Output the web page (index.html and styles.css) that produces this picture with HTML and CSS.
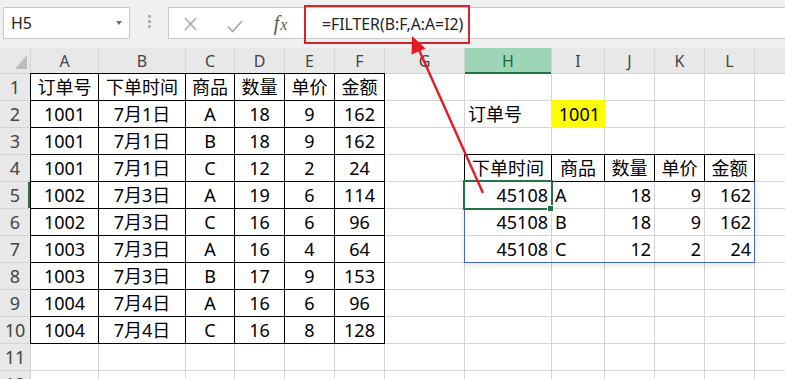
FILE: index.html
```html
<!DOCTYPE html>
<html lang="zh-CN">
<head>
    <meta charset="UTF-8">
    <meta name="viewport" content="width=device-width, initial-scale=1.0">
    <title>FILTER</title>
    <link rel="stylesheet" href="styles.css">
</head>
<body>
    <div class="toolbar">
        <div class="namebox">
            <span>H5</span>
            <span class="caret"></span>
        </div>
        <div class="grip"><i></i><i></i><i></i></div>
        <div class="formula">
            <span class="icon icon-cancel">
                <svg width="13" height="14" viewBox="0 0 13 14"><path d="M1 1 L12 13 M12 1 L1 13" stroke="#a8a8a8" stroke-width="1.4" fill="none"/></svg>
            </span>
            <span class="icon icon-ok">
                <svg width="16" height="13" viewBox="0 0 16 13"><path d="M1 6.5 L5.5 11.5 L15 1" stroke="#a8a8a8" stroke-width="1.6" fill="none"/></svg>
            </span>
            <span class="icon icon-fx"><i>f</i><i class="x">x</i></span>
            <span class="formula-text">=FILTER(B:F,A:A=I2)</span>
        </div>
    </div>

    <div class="sheet">
        <!-- column headers -->
        <div class="corner">
            <svg width="30" height="25" viewBox="0 0 30 25"><polygon points="15,21 27,21 27,7" fill="#bdbdbd"/></svg>
        </div>
        <div class="ch">A</div><div class="ch">B</div><div class="ch">C</div><div class="ch">D</div>
        <div class="ch">E</div><div class="ch">F</div><div class="ch">G</div><div class="ch active">H</div>
        <div class="ch">I</div><div class="ch">J</div><div class="ch">K</div><div class="ch">L</div><div class="ch"></div>

        <!-- row 1 -->
        <div class="rh">1</div>
        <div class="c b">订单号</div><div class="c b">下单时间</div><div class="c b">商品</div>
        <div class="c b">数量</div><div class="c b">单价</div><div class="c b">金额</div>
        <div class="c"></div><div class="c"></div><div class="c"></div><div class="c"></div>
        <div class="c"></div><div class="c"></div><div class="c"></div>

        <!-- row 2 -->
        <div class="rh">2</div>
        <div class="c b">1001</div><div class="c b">7月1日</div><div class="c b">A</div>
        <div class="c b">18</div><div class="c b">9</div><div class="c b">162</div>
        <div class="c"></div>
        <div class="c l">订单号</div><div class="c r yellow">1001</div>
        <div class="c"></div><div class="c"></div><div class="c"></div><div class="c"></div>

        <!-- row 3 -->
        <div class="rh">3</div>
        <div class="c b">1001</div><div class="c b">7月1日</div><div class="c b">B</div>
        <div class="c b">18</div><div class="c b">9</div><div class="c b">162</div>
        <div class="c"></div><div class="c"></div><div class="c"></div><div class="c"></div>
        <div class="c"></div><div class="c"></div><div class="c"></div>

        <!-- row 4 -->
        <div class="rh">4</div>
        <div class="c b">1001</div><div class="c b">7月1日</div><div class="c b">C</div>
        <div class="c b">12</div><div class="c b">2</div><div class="c b">24</div>
        <div class="c"></div>
        <div class="c b">下单时间</div><div class="c b">商品</div><div class="c b">数量</div>
        <div class="c b">单价</div><div class="c b">金额</div>
        <div class="c"></div>

        <!-- row 5 -->
        <div class="rh sel-row">5</div>
        <div class="c b">1002</div><div class="c b">7月3日</div><div class="c b">A</div>
        <div class="c b">19</div><div class="c b">6</div><div class="c b">114</div>
        <div class="c"></div>
        <div class="c r selected">45108</div><div class="c l">A</div><div class="c r">18</div>
        <div class="c r">9</div><div class="c r">162</div>
        <div class="c"></div>

        <!-- row 6 -->
        <div class="rh">6</div>
        <div class="c b">1002</div><div class="c b">7月3日</div><div class="c b">C</div>
        <div class="c b">16</div><div class="c b">6</div><div class="c b">96</div>
        <div class="c"></div>
        <div class="c r">45108</div><div class="c l">B</div><div class="c r">18</div>
        <div class="c r">9</div><div class="c r">162</div>
        <div class="c"></div>

        <!-- row 7 -->
        <div class="rh">7</div>
        <div class="c b">1003</div><div class="c b">7月3日</div><div class="c b">A</div>
        <div class="c b">16</div><div class="c b">4</div><div class="c b">64</div>
        <div class="c"></div>
        <div class="c r">45108</div><div class="c l">C</div><div class="c r">12</div>
        <div class="c r">2</div><div class="c r">24</div>
        <div class="c"></div>

        <!-- row 8 -->
        <div class="rh">8</div>
        <div class="c b">1003</div><div class="c b">7月3日</div><div class="c b">B</div>
        <div class="c b">17</div><div class="c b">9</div><div class="c b">153</div>
        <div class="c"></div><div class="c"></div><div class="c"></div><div class="c"></div>
        <div class="c"></div><div class="c"></div><div class="c"></div>

        <!-- row 9 -->
        <div class="rh">9</div>
        <div class="c b">1004</div><div class="c b">7月4日</div><div class="c b">A</div>
        <div class="c b">16</div><div class="c b">6</div><div class="c b">96</div>
        <div class="c"></div><div class="c"></div><div class="c"></div><div class="c"></div>
        <div class="c"></div><div class="c"></div><div class="c"></div>

        <!-- row 10 -->
        <div class="rh">10</div>
        <div class="c b">1004</div><div class="c b">7月4日</div><div class="c b">C</div>
        <div class="c b">16</div><div class="c b">8</div><div class="c b">128</div>
        <div class="c"></div><div class="c"></div><div class="c"></div><div class="c"></div>
        <div class="c"></div><div class="c"></div><div class="c"></div>

        <!-- row 11 -->
        <div class="rh">11</div>
        <div class="c"></div><div class="c"></div><div class="c"></div><div class="c"></div>
        <div class="c"></div><div class="c"></div><div class="c"></div><div class="c"></div>
        <div class="c"></div><div class="c"></div><div class="c"></div><div class="c"></div><div class="c"></div>

        <!-- row 12 -->
        <div class="rh">12</div>
        <div class="c"></div><div class="c"></div><div class="c"></div><div class="c"></div>
        <div class="c"></div><div class="c"></div><div class="c"></div><div class="c"></div>
        <div class="c"></div><div class="c"></div><div class="c"></div><div class="c"></div><div class="c"></div>

        <!-- spill range border H5:L7 -->
        <div class="spill"></div>
    </div>

    <svg class="arrow" width="785" height="379" viewBox="0 0 785 379">
        <line x1="483" y1="193" x2="419" y2="50" stroke="#e31b23" stroke-width="2.4"/>
        <polygon points="412,36 425.5,48.5 411.5,54.5" fill="#e31b23"/>
    </svg>
</body>
</html>
```

FILE: styles.css
```css
body {
    margin: 0;
    width: 785px;
    height: 379px;
    overflow: hidden;
    position: relative;
    background-color: #fff;
    font-family: "Noto Sans", "Noto Sans CJK SC", sans-serif;
}

.toolbar {
    height: 48px;
    box-sizing: border-box;
    padding: 7px 0 0 3px;
    display: flex;
    align-items: flex-start;
    background-color: #f0f0f0;
}

.namebox {
    width: 127px;
    height: 32px;
    box-sizing: border-box;
    border: 1px solid #c9c9c9;
    background-color: #fff;
    display: flex;
    align-items: center;
    padding-left: 7px;
    font-size: 16px;
    color: #222;
}

.caret {
    margin-left: auto;
    margin-right: 7px;
    width: 0;
    height: 0;
    border-left: 3px solid transparent;
    border-right: 3px solid transparent;
    border-top: 4px solid #6b6b6b;
}

.grip {
    width: 38px;
    height: 32px;
    box-sizing: border-box;
    padding-bottom: 3px;
    display: flex;
    flex-direction: column;
    align-items: center;
    justify-content: center;
    gap: 2px;
}

.grip i {
    width: 3px;
    height: 3px;
    background-color: #b4b4b4;
}

.formula {
    flex: 1;
    height: 32px;
    box-sizing: border-box;
    border: 1px solid #c9c9c9;
    border-right: none;
    background-color: #fff;
    display: flex;
    align-items: center;
}

.icon {
    height: 30px;
    display: flex;
    align-items: center;
    justify-content: center;
}

.icon-cancel {
    width: 42px;
    padding-top: 2px;
    box-sizing: border-box;
}

.icon-ok {
    width: 48px;
    padding-top: 6px;
    box-sizing: border-box;
}

.icon-fx {
    width: 45px;
    font-family: "Liberation Serif", serif;
    font-style: italic;
    font-size: 20px;
    color: #595959;
    padding-right: 2px;
    box-sizing: border-box;
}

.icon-fx i {
    font-style: italic;
}

.icon-fx .x {
    font-size: 16px;
    margin-left: 1px;
    margin-top: 3px;
}

.formula-text {
    align-self: flex-start;
    margin-top: -3px;
    height: 39px;
    box-sizing: border-box;
    border: 2px solid #d8232a;
    padding: 0 5px 2px 16px;
    display: flex;
    align-items: center;
    font-size: 15.8px;
    color: #222;
    white-space: nowrap;
}

/* sheet grid: 1px gaps show through as gridlines */
.sheet {
    position: relative;
    display: grid;
    grid-template-columns: 30px 67px 86px 48px 49px 49px 49px 79px 86px 52px 49px 49px 49px 1fr;
    grid-template-rows: 25px repeat(12, 26px);
    gap: 1px;
    height: 331px;
    overflow: hidden;
    background-color: #d4d4d4;
}

.corner {
    background-color: #e8e8e8;
}

.corner svg {
    display: block;
}

.ch {
    background-color: #e8e8e8;
    color: #444;
    font-size: 16px;
    line-height: 25px;
    text-align: center;
    padding-top: 1px;
    box-sizing: border-box;
}

.ch.active {
    background-color: #9fd5b7;
    color: #1d6b3f;
    box-shadow: inset 0 -1px 0 #217346, 0 1px 0 #217346;
    position: relative;
    z-index: 1;
}

.rh {
    background-color: #e8e8e8;
    color: #444;
    font-size: 18px;
    line-height: 26px;
    text-align: center;
}

.rh.sel-row {
    box-shadow: inset -2px 0 0 #217346;
}

.c {
    background-color: #fff;
    color: #000;
    font-size: 18px;
    line-height: 26px;
    text-align: center;
    white-space: nowrap;
}

.c.b {
    box-shadow: 0 0 0 1px #000;
}

.c.r {
    text-align: right;
    padding-right: 3px;
}

.c.l {
    text-align: left;
    padding-left: 3px;
}

.c.yellow {
    background-color: #ffff00;
    box-shadow: 0 0 0 1px #ffff00;
    padding-right: 4px;
}

.c.selected {
    position: relative;
    z-index: 2;
    outline: 2px solid #217346;
}

.c.selected::after {
    content: "";
    position: absolute;
    right: -3px;
    bottom: -4px;
    width: 5px;
    height: 5px;
    background-color: #217346;
    border: 1px solid #fff;
}

.spill {
    position: absolute;
    grid-row: 6 / 9;
    grid-column: 9 / 14;
    top: 0;
    left: -1px;
    right: -1px;
    bottom: -1px;
    border: 1px solid #4169b8;
    border-top: none;
    box-shadow: 0 3px 6px rgba(0, 0, 0, 0.1);
    z-index: 1;
    pointer-events: none;
}

.arrow {
    position: absolute;
    top: 0;
    left: 0;
    z-index: 5;
    pointer-events: none;
}
```
